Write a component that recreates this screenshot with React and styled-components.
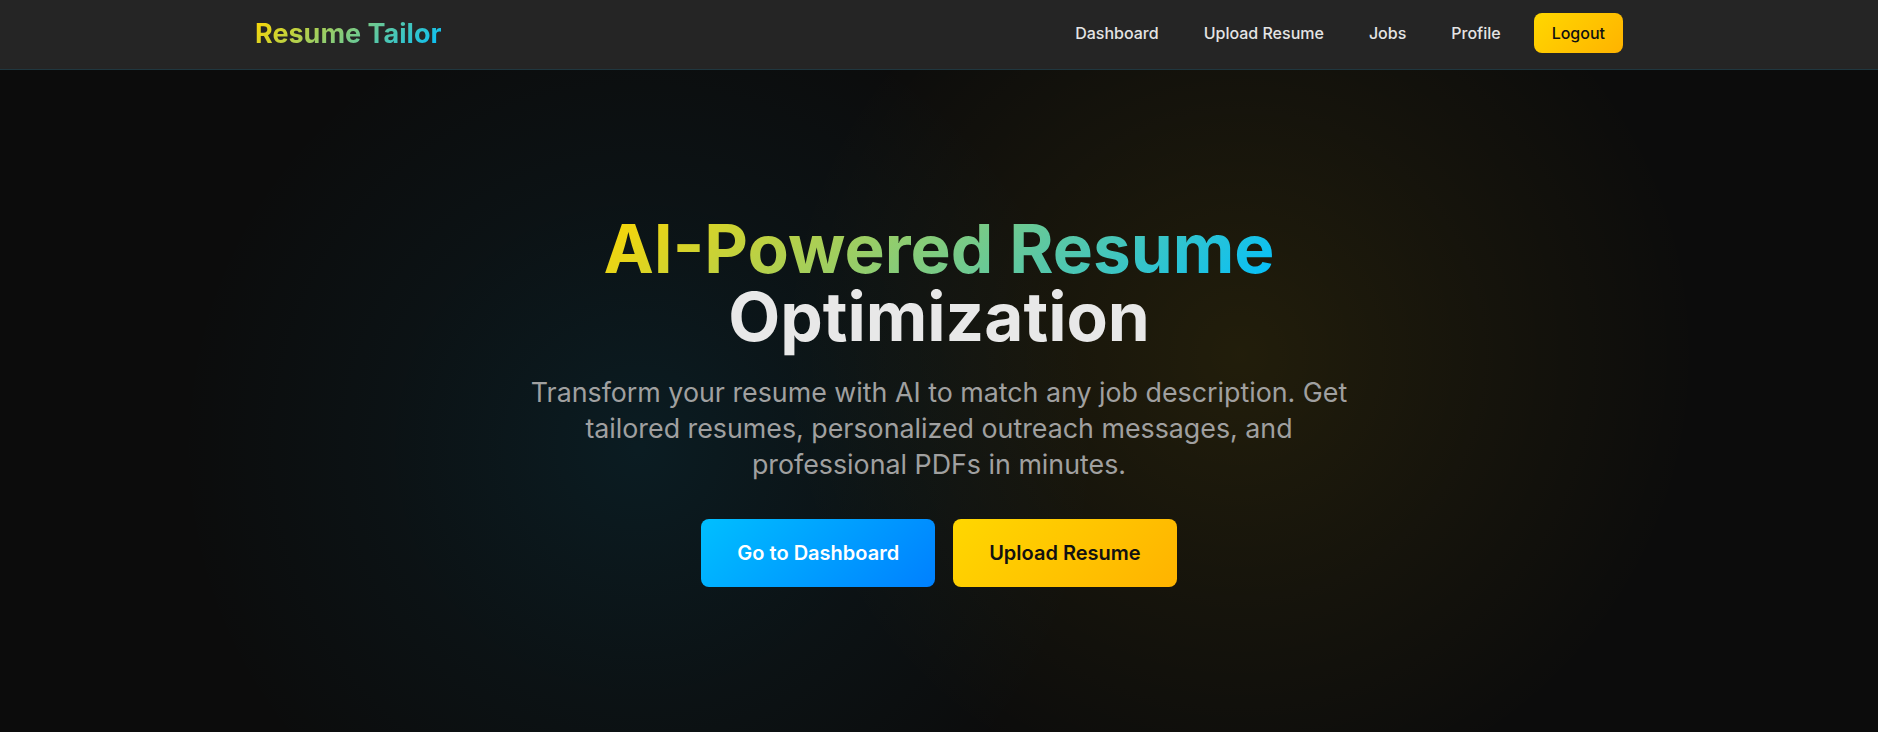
import React from "react";
import styled, { createGlobalStyle } from "styled-components";

const GlobalStyle = createGlobalStyle`
  * {
    box-sizing: border-box;
  }
  body {
    margin: 0;
    background: #0b0b0b;
    font-family: Inter, "Noto Sans", sans-serif;
    color: #e8e8e8;
  }
`;

const navLinks = ["Dashboard", "Upload Resume", "Jobs", "Profile"];

const App = () => {
  return (
    <>
      <GlobalStyle />
      <Navbar>
        <NavInner>
          <Logo href="#">Resume Tailor</Logo>
          <NavMenu>
            {navLinks.map((link) => (
              <NavLink key={link} href="#">
                {link}
              </NavLink>
            ))}
            <LogoutButton type="button">Logout</LogoutButton>
          </NavMenu>
        </NavInner>
      </Navbar>
      <Hero>
        <HeroContent>
          <Title>
            <GradientText>AI-Powered Resume</GradientText>
            <br />
            Optimization
          </Title>
          <Subtitle>
            Transform your resume with AI to match any job description. Get
            tailored resumes, personalized outreach messages, and professional
            PDFs in minutes.
          </Subtitle>
          <Actions>
            <CtaButton type="button" variant="blue">
              Go to Dashboard
            </CtaButton>
            <CtaButton type="button" variant="yellow">
              Upload Resume
            </CtaButton>
          </Actions>
        </HeroContent>
      </Hero>
    </>
  );
};

const Navbar = styled.nav`
  background: #252525;
  border-bottom: 1px solid rgba(0, 191, 255, 0.12);
`;

const NavInner = styled.div`
  max-width: 1400px;
  margin: 0 auto;
  padding: 0 16px 3px;
  height: 69px;
  display: flex;
  align-items: center;
  justify-content: space-between;
`;

const Logo = styled.a`
  font-size: 27px;
  font-weight: 700;
  text-decoration: none;
  background: linear-gradient(135deg, #ffd700, #00bfff);
  -webkit-background-clip: text;
  background-clip: text;
  color: transparent;
`;

const NavMenu = styled.div`
  display: flex;
  align-items: center;
  gap: 21px;
`;

const NavLink = styled.a`
  padding: 8px 12px;
  color: #e4e4e4;
  font-size: 16px;
  font-weight: 500;
  text-decoration: none;
`;

const LogoutButton = styled.button`
  height: 40px;
  padding: 0 18px;
  border: none;
  border-radius: 8px;
  background: linear-gradient(135deg, #ffd700, #ffb300);
  color: #111;
  font-family: inherit;
  font-size: 16px;
  font-weight: 500;
  cursor: pointer;
`;

const Hero = styled.section`
  min-height: calc(100vh - 70px);
  display: flex;
  align-items: center;
  justify-content: center;
  background: radial-gradient(
      circle 460px at 34% 57%,
      rgba(0, 170, 230, 0.1),
      rgba(0, 170, 230, 0.04) 55%,
      transparent 100%
    ),
    radial-gradient(
      circle 460px at 66% 43%,
      rgba(255, 205, 0, 0.09),
      rgba(255, 205, 0, 0.04) 55%,
      transparent 100%
    ),
    #0c0c0c;
`;

const HeroContent = styled.div`
  max-width: 860px;
  text-align: center;
  display: flex;
  flex-direction: column;
  align-items: center;
`;

const Title = styled.h1`
  margin: 0 0 23px;
  font-size: 67.5px;
  font-weight: 700;
  line-height: 68px;
  color: #e8e8e8;
`;

const GradientText = styled.span`
  background: linear-gradient(135deg, #ffd700, #00bfff);
  -webkit-background-clip: text;
  background-clip: text;
  color: transparent;
`;

const Subtitle = styled.p`
  margin: 0 0 37px;
  font-size: 26.8px;
  line-height: 36px;
  color: #a0a0a0;
`;

const Actions = styled.div`
  display: flex;
  gap: 18px;
`;

const CtaButton = styled.button`
  height: 68px;
  padding: 0 36px;
  border: none;
  border-radius: 8px;
  font-family: inherit;
  font-size: 20px;
  font-weight: 600;
  cursor: pointer;
  color: ${(p) => (p.variant === "blue" ? "#fff" : "#111")};
  background: ${(p) =>
    p.variant === "blue"
      ? "linear-gradient(135deg, #00bfff, #0080ff)"
      : "linear-gradient(135deg, #ffd700, #ffb300)"};
`;

export default App;
